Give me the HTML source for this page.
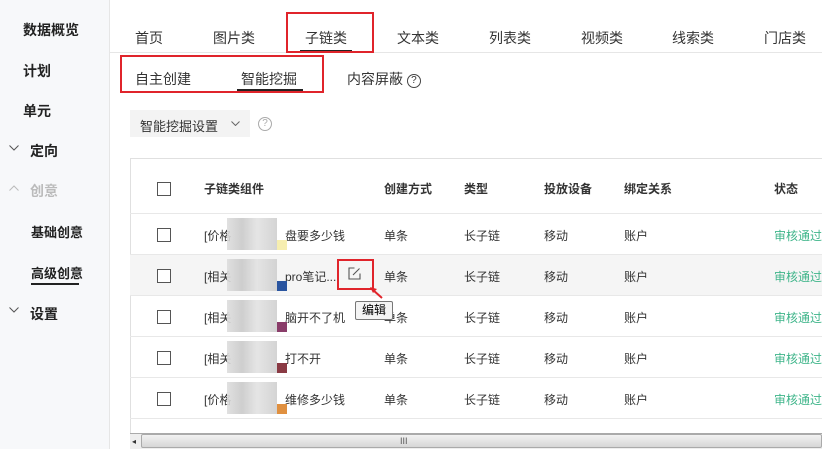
<!DOCTYPE html>
<html><head><meta charset="utf-8"><style>
*{margin:0;padding:0;box-sizing:border-box}
body{width:822px;height:449px;overflow:hidden;background:#fff;font-family:"Liberation Sans","Noto Sans CJK SC",sans-serif;font-size:13px;color:#333;position:relative}
.a{position:absolute;white-space:nowrap}
.side{position:absolute;left:0;top:0;width:110px;height:449px;background:#f7f8fa;border-right:1px solid #e6e6e6}
.sb{font-weight:bold;font-size:14px;color:#222}
.tab{font-size:14px;color:#333;top:28px}
.row{position:absolute;left:130px;width:692px;height:41px;border-bottom:1px solid #e8e8e8;overflow:hidden}
.cb{position:absolute;left:27px;top:14px;width:14px;height:14px;border:1px solid #555;background:#fff}
.c{position:absolute;top:13px;font-size:12px;color:#333;white-space:nowrap}
.g{color:#3fb58a}
.blur{position:absolute;left:97px;top:4px;width:50px;height:32px;background:linear-gradient(90deg,#ddd,#c9c9c9 30%,#e2e2e2 60%,#cfcfcf);opacity:.9}
.sq{position:absolute;left:147px;top:26px;width:10px;height:10px}
</style></head><body>
<div class="side">
<div class="a sb" style="left:23px;top:20px">数据概览</div>
<div class="a sb" style="left:23px;top:61px">计划</div>
<div class="a sb" style="left:23px;top:101px">单元</div>
<svg class="a" style="left:9px;top:145px" width="10" height="6"><path d="M0.5 0.5 L5 5 L9.5 0.5" fill="none" stroke="#555"/></svg>
<div class="a sb" style="left:30px;top:141px">定向</div>
<svg class="a" style="left:9px;top:185px" width="10" height="6"><path d="M0.5 5.5 L5 1 L9.5 5.5" fill="none" stroke="#bbb"/></svg>
<div class="a sb" style="left:30px;top:181px;color:#bbb">创意</div>
<div class="a sb" style="left:31px;top:222px;font-size:13px">基础创意</div>
<div class="a sb" style="left:31px;top:263px;font-size:13px">高级创意</div>
<div class="a" style="left:31px;top:283px;width:48px;height:2px;background:#222"></div>
<svg class="a" style="left:9px;top:307px" width="10" height="6"><path d="M0.5 0.5 L5 5 L9.5 0.5" fill="none" stroke="#555"/></svg>
<div class="a sb" style="left:30px;top:304px">设置</div>
</div>
<div class="a" style="left:110px;top:52px;width:712px;height:1px;background:#e6e6e6"></div>
<div class="a tab" style="left:135px">首页</div>
<div class="a tab" style="left:213px">图片类</div>
<div class="a tab" style="left:305px">子链类</div>
<div class="a" style="left:300px;top:50px;width:52px;height:2px;background:#222"></div>
<div class="a tab" style="left:397px">文本类</div>
<div class="a tab" style="left:489px">列表类</div>
<div class="a tab" style="left:581px">视频类</div>
<div class="a tab" style="left:672px">线索类</div>
<div class="a tab" style="left:764px">门店类</div>
<div class="a" style="left:286px;top:12px;width:88px;height:41px;border:2px solid #e0242b"></div>
<div class="a" style="left:135px;top:69px;font-size:14px">自主创建</div>
<div class="a" style="left:241px;top:69px;font-size:14px">智能挖掘</div>
<div class="a" style="left:237px;top:89px;width:66px;height:2px;background:#222"></div>
<div class="a" style="left:347px;top:69px;font-size:14px">内容屏蔽 <span style="display:inline-block;width:14px;height:14px;border:1px solid #444;border-radius:50%;font-size:10px;line-height:12px;text-align:center;vertical-align:1px">?</span></div>
<div class="a" style="left:120px;top:55px;width:204px;height:38px;border:2px solid #e0242b"></div>
<div class="a" style="left:130px;top:110px;width:120px;height:27px;background:#f3f3f3"></div>
<div class="a" style="left:140px;top:116px;font-size:13px">智能挖掘设置</div>
<svg class="a" style="left:231px;top:121px" width="9" height="5"><path d="M0.5 0.5 L4.5 4.5 L8.5 0.5" fill="none" stroke="#666"/></svg>
<div class="a" style="left:258px;top:117px;width:14px;height:14px;border:1px solid #aaa;border-radius:50%;font-size:10px;line-height:12px;text-align:center;color:#aaa">?</div>
<div class="a" style="left:130px;top:158px;width:692px;height:1px;background:#e0e0e0"></div>
<div class="a" style="left:130px;top:158px;width:1px;height:275px;background:#e0e0e0"></div>
<div class="row" style="top:159px;height:55px"><div class="cb" style="top:23px"></div>
<div class="c" style="left:74px;top:21px;font-weight:bold">子链类组件</div>
<div class="c" style="left:254px;top:21px;font-weight:bold">创建方式</div>
<div class="c" style="left:334px;top:21px;font-weight:bold">类型</div>
<div class="c" style="left:414px;top:21px;font-weight:bold">投放设备</div>
<div class="c" style="left:494px;top:21px;font-weight:bold">绑定关系</div>
<div class="c" style="left:644px;top:21px;font-weight:bold">状态</div></div>
<div class="row" style="top:214px"><div class="cb"></div><div class="c" style="left:74px">[价格</div><div class="c" style="left:155px">盘要多少钱</div><div class="blur"></div><div class="sq" style="background:#f6eeb0"></div><div class="c" style="left:254px">单条</div><div class="c" style="left:334px">长子链</div><div class="c" style="left:414px">移动</div><div class="c" style="left:494px">账户</div><div class="c g" style="left:644px">审核通过</div></div>
<div class="row" style="top:255px;background:#f5f5f5"><div class="cb"></div><div class="c" style="left:74px">[相关</div><div class="c" style="left:155px">pro笔记...</div><div class="blur"></div><div class="sq" style="background:#2a55a0"></div><div class="c" style="left:254px">单条</div><div class="c" style="left:334px">长子链</div><div class="c" style="left:414px">移动</div><div class="c" style="left:494px">账户</div><div class="c g" style="left:644px">审核通过</div>
<svg class="a" style="left:218px;top:12px" width="13" height="13" viewBox="0 0 13 13" fill="none" stroke="#555" stroke-width="1.1"><path d="M6.5 1H1v11h11V6.5"/><path d="M5 8 L11.5 1.5"/></svg></div>
<div class="row" style="top:296px"><div class="cb"></div><div class="c" style="left:74px">[相关</div><div class="c" style="left:155px">脑开不了机</div><div class="blur"></div><div class="sq" style="background:#8a3d6a"></div><div class="c" style="left:254px">单条</div><div class="c" style="left:334px">长子链</div><div class="c" style="left:414px">移动</div><div class="c" style="left:494px">账户</div><div class="c g" style="left:644px">审核通过</div></div>
<div class="row" style="top:337px"><div class="cb"></div><div class="c" style="left:74px">[相关</div><div class="c" style="left:155px">打不开</div><div class="blur"></div><div class="sq" style="background:#8a3a44"></div><div class="c" style="left:254px">单条</div><div class="c" style="left:334px">长子链</div><div class="c" style="left:414px">移动</div><div class="c" style="left:494px">账户</div><div class="c g" style="left:644px">审核通过</div></div>
<div class="row" style="top:378px"><div class="cb"></div><div class="c" style="left:74px">[价格</div><div class="c" style="left:155px">维修多少钱</div><div class="blur"></div><div class="sq" style="background:#e09040"></div><div class="c" style="left:254px">单条</div><div class="c" style="left:334px">长子链</div><div class="c" style="left:414px">移动</div><div class="c" style="left:494px">账户</div><div class="c g" style="left:644px">审核通过</div></div>
<div class="a" style="left:337px;top:259px;width:37px;height:31px;border:2px solid #e0242b"></div>
<svg class="a" style="left:365px;top:284px" width="20" height="16"><path d="M17 14 L8 6" stroke="#e0242b" stroke-width="2"/><path d="M5 3 L12 5 L8 9 Z" fill="#e0242b"/></svg>
<div class="a" style="left:355px;top:301px;width:38px;height:19px;background:#f4f4f4;border:1px solid #777;border-radius:2px;font-size:12px;line-height:17px;text-align:center;color:#000">编辑</div>
<div class="a" style="left:130px;top:433px;width:692px;height:16px;background:#eee;border-top:1px solid #aaa"></div>
<div class="a" style="left:132px;top:437px;font-size:8px;color:#333">◂</div>
<div class="a" style="left:141px;top:434px;width:681px;height:14px;background:linear-gradient(#f2f2f2,#d6d6d6);border:1px solid #aaa;border-radius:2px"></div>
<div class="a" style="left:400px;top:436px;font-size:9px;color:#555">III</div>
</body></html>
